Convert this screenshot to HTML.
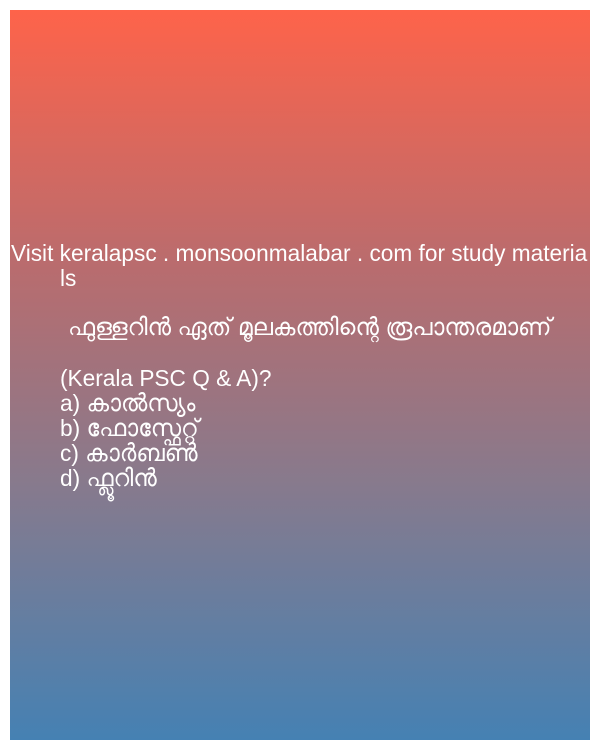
<!DOCTYPE html>
<html><head><meta charset="utf-8"><style>
html,body{margin:0;padding:0;background:#fff;width:600px;height:750px;overflow:hidden}
.bg{position:absolute;left:10px;top:10px;width:580px;height:730px;background:linear-gradient(to bottom,#fe634a,#b96c6e 35%,#877a8d 65%,#4581b3)}
.t{position:absolute;color:#fff;font-family:"Liberation Sans","Noto Sans CJK JP",sans-serif;font-size:23px;line-height:25px;white-space:nowrap;transform:scaleX(0.985);transform-origin:left top}
.m{font-size:24px}
</style></head><body>
<div class="bg"></div>
<div class="t" style="left:11px;top:241px">Visit keralapsc . monsoonmalabar . com for study materia</div>
<div class="t" style="left:60px;top:266px">ls</div>
<div class="t" style="left:68px;top:315px;font-size:24px">ഫുള്ളറിൻ ഏത് മൂലകത്തിന്റെ രൂപാന്തരമാണ്</div>
<div class="t" style="left:60px;top:366px">(Kerala PSC Q &amp; A)?</div>
<div class="t" style="left:60px;top:391px">a) <span class="m">കാൽസ്യം</span></div>
<div class="t" style="left:60px;top:416px">b) <span class="m">ഫോസ്ഫേറ്റ്</span></div>
<div class="t" style="left:60px;top:441px">c) <span class="m">കാർബൺ</span></div>
<div class="t" style="left:60px;top:466px">d) <span class="m">ഫ്ലൂറിൻ</span></div>
</body></html>
